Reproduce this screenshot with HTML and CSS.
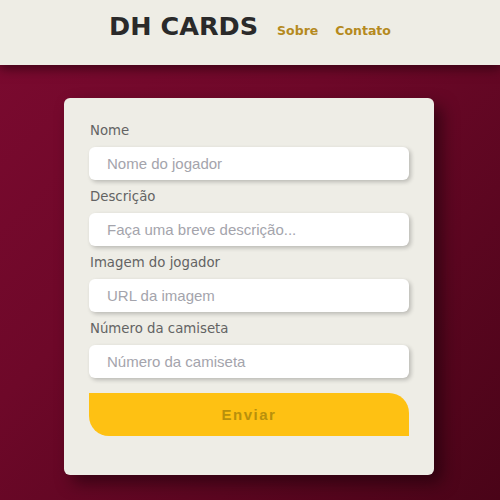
FILE: index.html
```html
<!DOCTYPE html>
<html lang="pt-BR">
<head>
<meta charset="utf-8">
<title>DH Cards</title>
<link rel="stylesheet" href="styles.css">
</head>
<body>
<header class="topbar">
  <h1 class="brand">DH CARDS</h1>
  <nav class="nav">
    <a class="nav-link" href="#">Sobre</a>
    <a class="nav-link" href="#">Contato</a>
  </nav>
</header>
<main class="main">
  <form class="card">
    <label class="field-label" for="nome">Nome</label>
    <input class="field" id="nome" type="text" placeholder="Nome do jogador">
    <label class="field-label" for="desc">Descrição</label>
    <input class="field" id="desc" type="text" placeholder="Faça uma breve descrição...">
    <label class="field-label" for="img">Imagem do jogador</label>
    <input class="field" id="img" type="text" placeholder="URL da imagem">
    <label class="field-label" for="num">Número da camiseta</label>
    <input class="field" id="num" type="text" placeholder="Número da camiseta">
    <button class="submit" type="button">Enviar</button>
  </form>
</main>
</body>
</html>
```
FILE: styles.css
```css
* { box-sizing: border-box; }
html, body { margin: 0; padding: 0; }
body {
  width: 500px;
  height: 500px;
  overflow: hidden;
  background: linear-gradient(135deg, #7c0a30 0%, #6e0829 40%, #4a0418 100%);
  font-family: "DejaVu Sans", sans-serif;
}
.topbar {
  height: 65px;
  background: #eeede5;
  display: flex;
  justify-content: center;
  align-items: baseline;
  gap: 19px;
  padding-top: 11px;
  box-shadow: 0 4px 10px rgba(30, 0, 10, 0.6);
  position: relative;
}
.brand {
  margin: 0;
  font-family: "DejaVu Sans", sans-serif;
  font-weight: bold;
  font-size: 25.5px;
  color: #2a2a2a;
}
.nav { display: flex; gap: 17px; }
.nav-link {
  font-family: "DejaVu Sans", sans-serif;
  font-weight: bold;
  font-size: 12.5px;
  color: #b58a1e;
  text-decoration: none;
}
.main {
  padding-top: 33px;
  display: flex;
  justify-content: center;
}
.card {
  width: 370px;
  height: 377px;
  margin-left: -2px;
  background: #eeede6;
  border-radius: 6px;
  padding: 24px 25px 0 25px;
  display: flex;
  flex-direction: column;
  box-shadow: 8px 8px 16px rgba(20, 0, 8, 0.55);
}
.field-label {
  font-family: "DejaVu Sans", sans-serif;
  font-size: 13.3px;
  color: #636363;
  height: 17px;
  line-height: 17px;
  margin-bottom: 8px;
  padding-left: 1px;
}
.field {
  height: 33px;
  width: 320px;
  flex: none;
  border: none;
  border-radius: 6px;
  background: #ffffff;
  padding: 0 18px;
  font-family: "Liberation Sans", Arial, sans-serif;
  font-size: 15px;
  color: #333;
  margin-bottom: 8px;
  box-shadow: 2px 2px 4px rgba(0, 0, 0, 0.22);
  outline: none;
}
.field::placeholder { color: #a4a4ac; }
.submit {
  margin-top: 7px;
  width: 320px;
  height: 43px;
  flex: none;
  border: none;
  background: #fec113;
  border-radius: 0 20px 0 20px;
  font-family: "Liberation Sans", Arial, sans-serif;
  font-weight: bold;
  font-size: 15px;
  letter-spacing: 1.5px;
  color: #b8900c;
  padding: 0;
}
```
